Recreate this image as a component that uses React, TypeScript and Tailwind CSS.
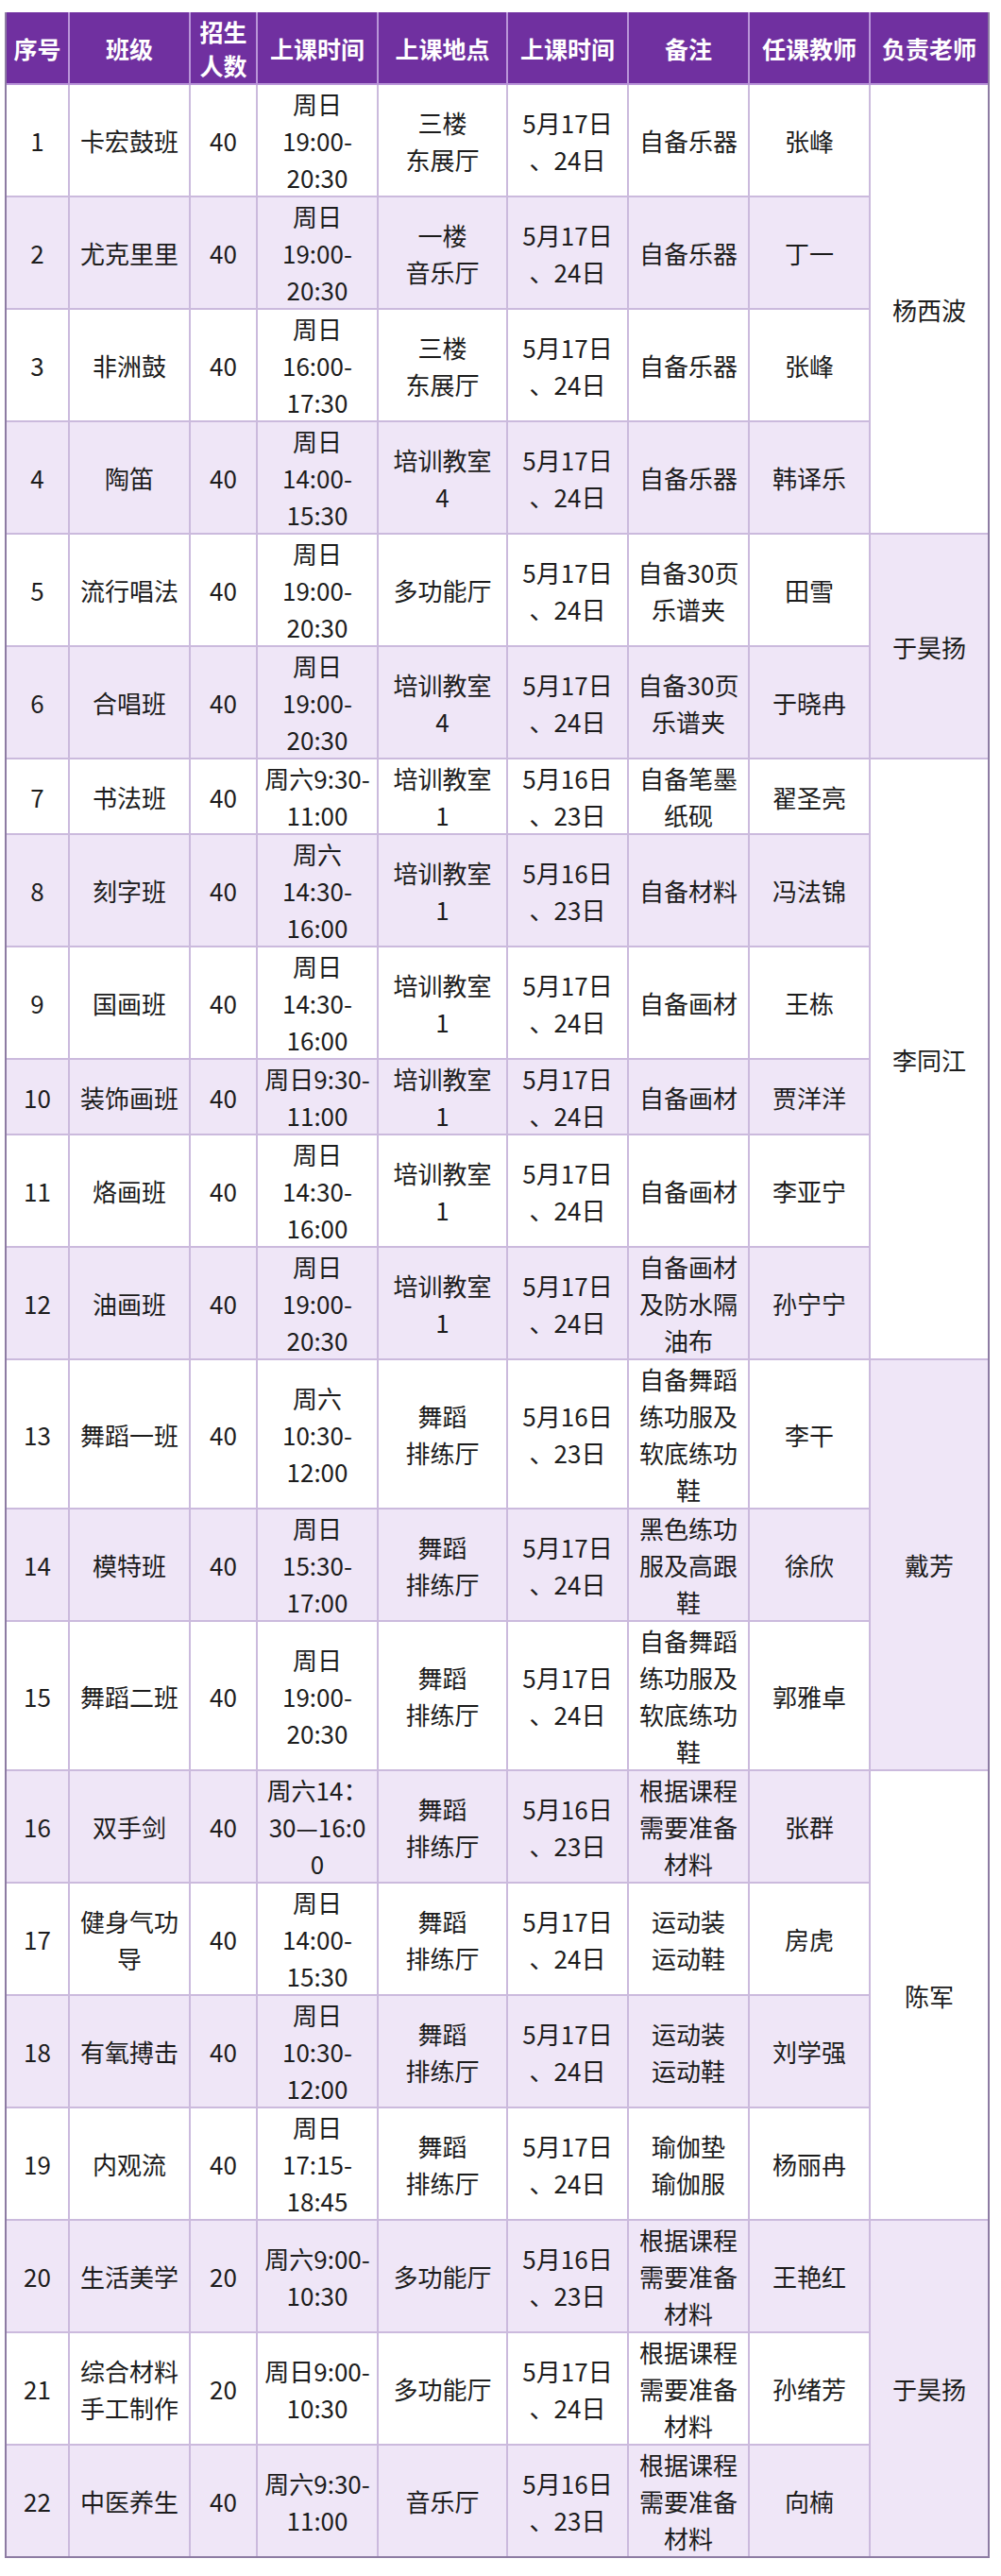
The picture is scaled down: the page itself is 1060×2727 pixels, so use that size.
import React from 'react';

type Row = {
  no: string;
  name: string[];
  count: string;
  time: string[];
  place: string[];
  date: string[];
  note: string[];
  teacher: string;
};

const D16 = ['5月16日', '、23日'];
const D17 = ['5月17日', '、24日'];
const DANCE = ['舞蹈', '排练厅'];
const PREP = ['根据课程', '需要准备', '材料'];

const rows: Row[] = [
  { no: '1', name: ['卡宏鼓班'], count: '40', time: ['周日', '19:00-', '20:30'], place: ['三楼', '东展厅'], date: D17, note: ['自备乐器'], teacher: '张峰' },
  { no: '2', name: ['尤克里里'], count: '40', time: ['周日', '19:00-', '20:30'], place: ['一楼', '音乐厅'], date: D17, note: ['自备乐器'], teacher: '丁一' },
  { no: '3', name: ['非洲鼓'], count: '40', time: ['周日', '16:00-', '17:30'], place: ['三楼', '东展厅'], date: D17, note: ['自备乐器'], teacher: '张峰' },
  { no: '4', name: ['陶笛'], count: '40', time: ['周日', '14:00-', '15:30'], place: ['培训教室', '4'], date: D17, note: ['自备乐器'], teacher: '韩译乐' },
  { no: '5', name: ['流行唱法'], count: '40', time: ['周日', '19:00-', '20:30'], place: ['多功能厅'], date: D17, note: ['自备30页', '乐谱夹'], teacher: '田雪' },
  { no: '6', name: ['合唱班'], count: '40', time: ['周日', '19:00-', '20:30'], place: ['培训教室', '4'], date: D17, note: ['自备30页', '乐谱夹'], teacher: '于晓冉' },
  { no: '7', name: ['书法班'], count: '40', time: ['周六9:30-', '11:00'], place: ['培训教室', '1'], date: D16, note: ['自备笔墨', '纸砚'], teacher: '翟圣亮' },
  { no: '8', name: ['刻字班'], count: '40', time: ['周六', '14:30-', '16:00'], place: ['培训教室', '1'], date: D16, note: ['自备材料'], teacher: '冯法锦' },
  { no: '9', name: ['国画班'], count: '40', time: ['周日', '14:30-', '16:00'], place: ['培训教室', '1'], date: D17, note: ['自备画材'], teacher: '王栋' },
  { no: '10', name: ['装饰画班'], count: '40', time: ['周日9:30-', '11:00'], place: ['培训教室', '1'], date: D17, note: ['自备画材'], teacher: '贾洋洋' },
  { no: '11', name: ['烙画班'], count: '40', time: ['周日', '14:30-', '16:00'], place: ['培训教室', '1'], date: D17, note: ['自备画材'], teacher: '李亚宁' },
  { no: '12', name: ['油画班'], count: '40', time: ['周日', '19:00-', '20:30'], place: ['培训教室', '1'], date: D17, note: ['自备画材', '及防水隔', '油布'], teacher: '孙宁宁' },
  { no: '13', name: ['舞蹈一班'], count: '40', time: ['周六', '10:30-', '12:00'], place: DANCE, date: D16, note: ['自备舞蹈', '练功服及', '软底练功', '鞋'], teacher: '李干' },
  { no: '14', name: ['模特班'], count: '40', time: ['周日', '15:30-', '17:00'], place: DANCE, date: D17, note: ['黑色练功', '服及高跟', '鞋'], teacher: '徐欣' },
  { no: '15', name: ['舞蹈二班'], count: '40', time: ['周日', '19:00-', '20:30'], place: DANCE, date: D17, note: ['自备舞蹈', '练功服及', '软底练功', '鞋'], teacher: '郭雅卓' },
  { no: '16', name: ['双手剑'], count: '40', time: ['周六14：', '30—16:0', '0'], place: DANCE, date: D16, note: PREP, teacher: '张群' },
  { no: '17', name: ['健身气功', '导'], count: '40', time: ['周日', '14:00-', '15:30'], place: DANCE, date: D17, note: ['运动装', '运动鞋'], teacher: '房虎' },
  { no: '18', name: ['有氧搏击'], count: '40', time: ['周日', '10:30-', '12:00'], place: DANCE, date: D17, note: ['运动装', '运动鞋'], teacher: '刘学强' },
  { no: '19', name: ['内观流'], count: '40', time: ['周日', '17:15-', '18:45'], place: DANCE, date: D17, note: ['瑜伽垫', '瑜伽服'], teacher: '杨丽冉' },
  { no: '20', name: ['生活美学'], count: '20', time: ['周六9:00-', '10:30'], place: ['多功能厅'], date: D16, note: PREP, teacher: '王艳红' },
  { no: '21', name: ['综合材料', '手工制作'], count: '20', time: ['周日9:00-', '10:30'], place: ['多功能厅'], date: D17, note: PREP, teacher: '孙绪芳' },
  { no: '22', name: ['中医养生'], count: '40', time: ['周六9:30-', '11:00'], place: ['音乐厅'], date: D16, note: PREP, teacher: '向楠' },
];

// 负责老师 merged cells: start row index -> [span, name, shaded]
const leads: Record<number, [number, string, boolean]> = {
  0: [4, '杨西波', false],
  4: [2, '于昊扬', true],
  6: [6, '李同江', false],
  12: [3, '戴芳', true],
  15: [4, '陈军', false],
  19: [3, '于昊扬', true],
};

const headers: string[][] = [
  ['序号'],
  ['班级'],
  ['招生', '人数'],
  ['上课时间'],
  ['上课地点'],
  ['上课时间'],
  ['备注'],
  ['任课教师'],
  ['负责老师'],
];

const cell = 'border-2 border-[#cbbadd] text-center align-middle p-0 leading-[39px]';

function Lines({ items }: { items: string[] }) {
  return (
    <>
      {items.map((t, i) => (
        <div key={i} className="whitespace-nowrap">
          {t}
        </div>
      ))}
    </>
  );
}

export default function App() {
  return (
    <div className="min-h-screen bg-white pt-[13px] pl-[5px] pb-[15px] font-['Noto_Sans_CJK_SC','Microsoft_YaHei',sans-serif] text-[#1c1c1c]">
      <div className="w-[1043px] border-x-2 border-b-2 border-[#8d7ca3]">
        <table className="w-full table-fixed border-collapse border-hidden text-[26px]">
          <colgroup>
            <col className="w-[66px]" />
            <col className="w-[128px]" />
            <col className="w-[71px]" />
            <col className="w-[128px]" />
            <col className="w-[137px]" />
            <col className="w-[128px]" />
            <col className="w-[128px]" />
            <col className="w-[128px]" />
            <col className="w-[125px]" />
          </colgroup>
          <thead>
            <tr>
              {headers.map((h, i) => (
                <th
                  key={i}
                  className="h-[76px] border-2 border-[#b995d8] bg-[#7030a0] p-0 text-center align-middle text-[25px] font-bold leading-[36px] text-white"
                >
                  <Lines items={h} />
                </th>
              ))}
            </tr>
          </thead>
          <tbody>
            {rows.map((r, i) => {
              const bg = i % 2 === 1 ? 'bg-[#efe6f7]' : 'bg-white';
              const lead = leads[i];
              return (
                <tr key={r.no} className={bg}>
                  <td className={cell}>{r.no}</td>
                  <td className={cell}>
                    <Lines items={r.name} />
                  </td>
                  <td className={cell}>{r.count}</td>
                  <td className={cell}>
                    <Lines items={r.time} />
                  </td>
                  <td className={cell}>
                    <Lines items={r.place} />
                  </td>
                  <td className={cell}>
                    <Lines items={r.date} />
                  </td>
                  <td className={cell}>
                    <Lines items={r.note} />
                  </td>
                  <td className={cell}>{r.teacher}</td>
                  {lead && (
                    <td
                      rowSpan={lead[0]}
                      className={`${cell} ${lead[2] ? 'bg-[#efe6f7]' : 'bg-white'}`}
                    >
                      {lead[1]}
                    </td>
                  )}
                </tr>
              );
            })}
          </tbody>
        </table>
      </div>
    </div>
  );
}
